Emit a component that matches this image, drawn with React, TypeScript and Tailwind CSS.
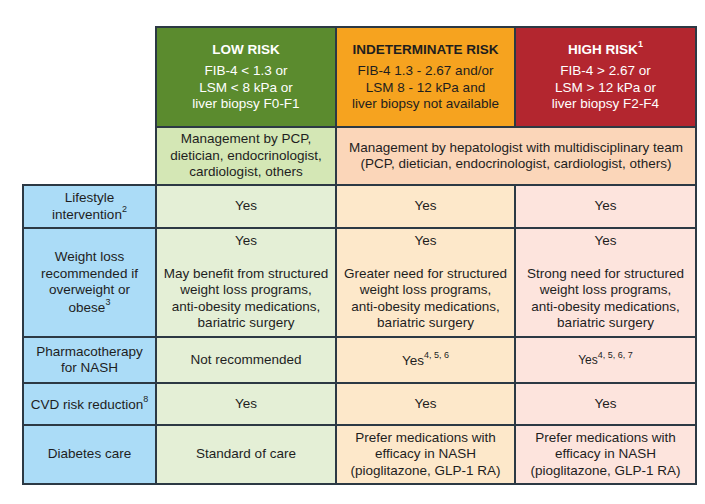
import React from 'react';

type Row = {
  label: React.ReactNode;
  height: string;
  low: React.ReactNode;
  mid: React.ReactNode;
  high: React.ReactNode;
};

const Sup = ({ children }: { children: React.ReactNode }) => (
  <sup className="text-[9px] relative -top-[1px] align-super leading-none">{children}</sup>
);

const weightText = (lead: string) => (
  <>
    <div>Yes</div>
    <div className="mt-[16px]">
      {lead}
      <br />
      weight loss programs,
      <br />
      anti-obesity medications,
      <br />
      bariatric surgery
    </div>
  </>
);

const rows: Row[] = [
  {
    label: (
      <>
        Lifestyle
        <br />
        intervention<Sup>2</Sup>
      </>
    ),
    height: 'h-[43px]',
    low: 'Yes',
    mid: 'Yes',
    high: 'Yes',
  },
  {
    label: (
      <>
        Weight loss
        <br />
        recommended if
        <br />
        overweight or
        <br />
        obese<Sup>3</Sup>
      </>
    ),
    height: 'h-[109px]',
    low: weightText('May benefit from structured'),
    mid: weightText('Greater need for structured'),
    high: weightText('Strong need for structured'),
  },
  {
    label: (
      <>
        Pharmacotherapy
        <br />
        for NASH
      </>
    ),
    height: 'h-[46px]',
    low: 'Not recommended',
    mid: (
      <>
        Yes<Sup>4, 5, 6</Sup>
      </>
    ),
    high: (
      <span className="text-[12px]">
        Yes<Sup>4, 5, 6, 7</Sup>
      </span>
    ),
  },
  {
    label: (
      <>
        CVD risk reduction<Sup>8</Sup>
      </>
    ),
    height: 'h-[42px]',
    low: 'Yes',
    mid: 'Yes',
    high: 'Yes',
  },
  {
    label: 'Diabetes care',
    height: 'h-[59px]',
    low: 'Standard of care',
    mid: (
      <>
        Prefer medications with
        <br />
        efficacy in NASH
        <br />
        (pioglitazone, GLP-1 RA)
      </>
    ),
    high: (
      <>
        Prefer medications with
        <br />
        efficacy in NASH
        <br />
        (pioglitazone, GLP-1 RA)
      </>
    ),
  },
];

const cell = 'border-2 border-[#2c3944] text-center align-middle px-1 leading-[16.5px]';

export default function App() {
  return (
    <div className="w-[705px] h-[504px] bg-white pl-[22px] pt-[26px] font-['Liberation_Sans',Arial,sans-serif] text-[13.5px] text-[#1e1e1e]">
      <table className="border-collapse table-fixed w-[673px]">
        <colgroup>
          <col className="w-[133px]" />
          <col className="w-[180px]" />
          <col className="w-[179px]" />
          <col className="w-[181px]" />
        </colgroup>
        <tbody>
          <tr className="h-[100px]">
            <td rowSpan={2} className="border-0" />
            <td className={`${cell} bg-[#5b8b2e] text-white`}>
              <div className="font-bold mb-[5px]">LOW RISK</div>
              FIB-4 &lt; 1.3 or
              <br />
              LSM &lt; 8 kPa or
              <br />
              liver biopsy F0-F1
            </td>
            <td className={`${cell} bg-[#f6a31f] text-[#1e1e1e]`}>
              <div className="font-bold mb-[5px]">INDETERMINATE RISK</div>
              FIB-4 1.3 - 2.67 and/or
              <br />
              LSM 8 - 12 kPa and
              <br />
              liver biopsy not available
            </td>
            <td className={`${cell} bg-[#b3262f] text-white`}>
              <div className="font-bold mb-[5px]">
                HIGH RISK<Sup>1</Sup>
              </div>
              FIB-4 &gt; 2.67 or
              <br />
              LSM &gt; 12 kPa or
              <br />
              liver biopsy F2-F4
            </td>
          </tr>
          <tr className="h-[58px]">
            <td className={`${cell} bg-[#d4e7b5]`}>
              Management by PCP,
              <br />
              dietician, endocrinologist,
              <br />
              cardiologist, others
            </td>
            <td colSpan={2} className={`${cell} bg-[#fbd6b9]`}>
              Management by hepatologist with multidisciplinary team
              <br />
              (PCP, dietician, endocrinologist, cardiologist, others)
            </td>
          </tr>
          {rows.map((r, i) => (
            <tr key={i} className={r.height}>
              <td className={`${cell} bg-[#abdcf7]`}>{r.label}</td>
              <td className={`${cell} bg-[#e4efd6]`}>{r.low}</td>
              <td className={`${cell} bg-[#fde8ca]`}>{r.mid}</td>
              <td className={`${cell} bg-[#fde4dd]`}>{r.high}</td>
            </tr>
          ))}
        </tbody>
      </table>
    </div>
  );
}
